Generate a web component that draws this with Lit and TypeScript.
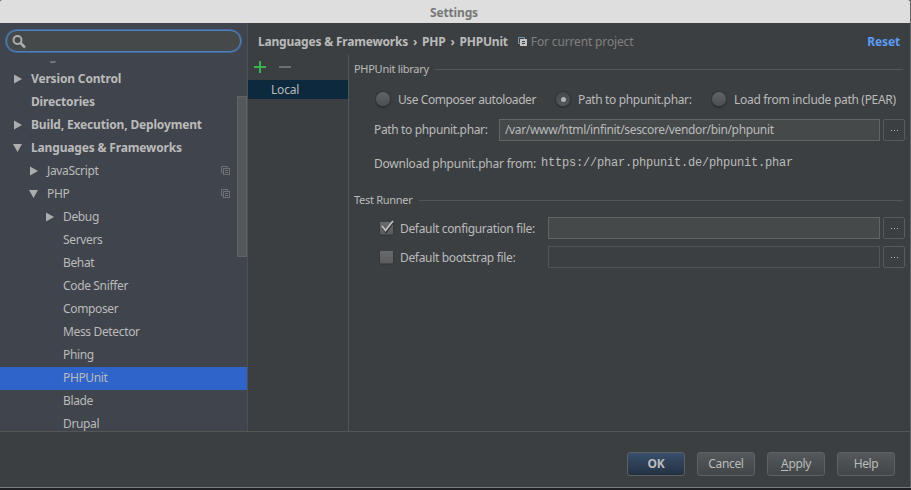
import { LitElement, html, css, svg, nothing } from "lit";
import { customElement } from "lit/decorators.js";
import { classMap } from "lit/directives/class-map.js";

interface TreeItem {
  label: string;
  level: number;
  arrow?: "open" | "closed";
  shared?: boolean;
  selected?: boolean;
  faded?: boolean;
}

const TREE: TreeItem[] = [
  { label: "Plugins", level: 0, faded: true },
  { label: "Version Control", level: 0, arrow: "closed" },
  { label: "Directories", level: 0 },
  { label: "Build, Execution, Deployment", level: 0, arrow: "closed" },
  { label: "Languages & Frameworks", level: 0, arrow: "open" },
  { label: "JavaScript", level: 1, arrow: "closed", shared: true },
  { label: "PHP", level: 1, arrow: "open", shared: true },
  { label: "Debug", level: 2, arrow: "closed" },
  { label: "Servers", level: 2 },
  { label: "Behat", level: 2 },
  { label: "Code Sniffer", level: 2 },
  { label: "Composer", level: 2 },
  { label: "Mess Detector", level: 2 },
  { label: "Phing", level: 2 },
  { label: "PHPUnit", level: 2, selected: true },
  { label: "Blade", level: 2 },
  { label: "Drupal", level: 2 },
];

const copyIcon = (back: string, front: string, fill: string) => html`
  <svg class="copy" width="10" height="10" viewBox="0 0 10 10">
    ${svg`<path d="M2.500 6.500H.5V.5H6.500V2" fill="none" stroke=${back} />
    <rect x="2.500" y="2.500" width="6" height="6" fill=${fill} stroke=${front} />
    <path d="M4 4.500H7M4 6.500H7" stroke=${fill === "none" ? front : "#3c3f41"} />`}
  </svg>`;

@customElement("app-root")
export class AppRoot extends LitElement {
  static styles = css`
    :host {
      display: block;
      width: 911px;
      height: 490px;
      overflow: hidden;
      background: #1e2024;
      color: #bbbbbb;
      font: 12px/16px "Noto Sans", sans-serif;
      letter-spacing: -0.35px;
      white-space: nowrap;
    }
    * { box-sizing: border-box; }
    svg { display: block; flex: none; }
    .window {
      width: 911px;
      height: 488px;
      display: flex;
      flex-direction: column;
      background: #3c3f41;
      border-right: 1px solid #616364;
      border-bottom: 1px solid #7b7c7c;
    }
    .title {
      flex: none;
      height: 23px;
      background: #dedede;
      color: #777777;
      font-weight: bold;
      letter-spacing: -0.15px;
      line-height: 25px;
      text-align: center;
      padding-right: 2px;
      border-radius: 2px 2px 0 0;
    }
    .body { height: 409px; display: flex; border-bottom: 1px solid #555555; }
    .side {
      flex: none;
      width: 248px;
      background: #40444c;
      border-right: 1px solid #4e5154;
      padding-top: 7px;
    }
    .search {
      width: 235px;
      height: 22px;
      margin-left: 6px;
      border: 1px solid #4b83c3;
      border-radius: 11px;
      background: #45494a;
      padding: 4px 0 0 5px;
      box-shadow: 0 0 0 1px #436793;
    }
    .scroll { height: 370px; margin-top: 9px; display: flex; overflow: hidden; }
    .tree { width: 247px; flex: none; margin-top: -16px; }
    .row { height: 23px; display: flex; align-items: center; padding: 0 0 1px 13px; }
    .l1 { padding-left: 29px; }
    .l2 { padding-left: 45px; }
    .l0 .label { font-weight: bold; letter-spacing: -0.16px; }
    .arrow { width: 18px; flex: none; }
    .label { flex: 1; }
    .faded { opacity: 0.5; }
    .selected { background: #2f65ca; }
    .row .copy { margin-right: 16px; }
    .bar {
      flex: none;
      width: 10px;
      height: 161px;
      margin: 35px 0 0 -10px;
      background: #55585b;
      border: 1px solid #606366;
    }
    .main { flex: 1; display: flex; flex-direction: column; min-width: 0; }
    .crumbs {
      height: 32px;
      display: flex;
      align-items: center;
      padding: 5px 10px 0 10px;
      font-weight: bold;
      letter-spacing: -0.2px;
    }
    .sep { width: 14px; text-align: center; }
    .crumbs .copy { margin: 0 3px 0 10px; }
    .scope { color: #808080; font-weight: normal; letter-spacing: -0.15px; flex: 1; }
    .reset { color: #589df6; letter-spacing: -0.16px; }
    .split { flex: 1; display: flex; min-height: 0; }
    .list { flex: none; width: 101px; border-right: 1px solid #555555; }
    .tools { height: 25px; padding: 6px 0 0 6px; display: flex; }
    .local { height: 19px; background: #0d293e; padding-left: 23px; line-height: 19px; letter-spacing: -0.2px; }
    .form { flex: 1; min-width: 0; padding-left: 5px; }
    .group {
      display: flex;
      align-items: center;
      height: 16px;
      font-size: 11px;
      letter-spacing: -0.28px;
      gap: 6px;
      padding-right: 7px;
    }
    .group::after { content: ""; height: 1px; flex: 1; background: #555555; }
    .g1 { margin-top: 6px; }
    .g2 { margin-top: 20px; }
    .line { display: flex; align-items: center; padding-left: 20px; }
    .line > span { flex: none; }
    .radios { height: 16px; margin-top: 14px; padding-left: 22px; }
    .radio {
      width: 14px;
      height: 14px;
      margin-right: 8px;
      border-radius: 50%;
      background: linear-gradient(#606365, #4d5052);
      box-shadow: 0 0 0 1px #323537, 0 1px 1px 1px #303335;
      display: grid;
      place-items: center;
    }
    .on { background: linear-gradient(#45484a, #55585a); }
    .on::after { content: ""; width: 5px; height: 5px; border-radius: 50%; background: #b4b4b4; }
    .r1, .r2, .r3 { padding-top: 1px; }
    .r1 { width: 144px; margin-right: 14px; letter-spacing: -0.42px; }
    .r2 { width: 120px; margin-right: 14px; }
    .r3 { letter-spacing: -0.3px; }
    .pathrow { height: 22px; margin-top: 12px; }
    .pathrow .cap { width: 125px; }
    .field { height: 22px; flex: 1; border: 1px solid #646464; background: #45494a; padding-left: 5px; line-height: 20px; }
    .off { background: none; border-color: #515355; }
    .dots {
      width: 22px;
      height: 22px;
      margin: 0 5px 0 3px;
      border: 1px solid #585b5c;
      border-radius: 2px;
      display: flex;
      align-items: center;
      justify-content: center;
      gap: 2px;
    }
    .dots i { width: 1px; height: 1px; background: #bbbbbb; }
    .download { height: 16px; margin-top: 15px; }
    .download .cap { width: 167px; letter-spacing: -0.22px; }
    .url { font-family: "Liberation Mono", monospace; letter-spacing: -0.2px; margin-top: -3px; }
    .checks { height: 22px; padding-left: 25px; }
    .c1 { margin-top: 9px; }
    .c2 { margin-top: 7px; }
    .checks .cap { width: 148px; padding-top: 1px; letter-spacing: -0.33px; }
    .check { margin-right: 6px; }
    .footer { flex: 1; display: flex; justify-content: flex-end; gap: 12px; padding: 20px 15px 0 0; }
    .btn {
      width: 58px;
      height: 24px;
      border: 1px solid #5e6161;
      border-radius: 3px;
      background: linear-gradient(#54585a, #424648);
      text-align: center;
      line-height: 22px;
    }
    .ok { background: linear-gradient(#384f6b, #233143); font-weight: bold; }
    .key { text-decoration: underline; text-underline-offset: 2px; }
  `;

  private arrow(kind?: "open" | "closed") {
    if (!kind) return nothing;
    const d = kind === "open" ? "M0 1H9L4.500 9Z" : "M1 0.500L9 5L1 9.500Z";
    return html`<svg width="9" height="10" viewBox="0 0 9 10"><path d=${d} fill="#adadad" /></svg>`;
  }

  private row(t: TreeItem) {
    const cls = {
      row: true,
      ["l" + t.level]: true,
      faded: !!t.faded,
      selected: !!t.selected,
    };
    return html`<div class=${classMap(cls)}>
      <span class="arrow">${this.arrow(t.arrow)}</span>
      <span class="label">${t.label}</span>
      ${t.shared ? copyIcon("#6f7275", "#6f7275", "none") : nothing}
    </div>`;
  }

  private dots() {
    return html`<div class="dots"><i></i><i></i><i></i></div>`;
  }

  private check(on: boolean) {
    return html`<svg class="check" width="15" height="17" viewBox="0 0 15 17">
      <defs>
        <linearGradient id="g" x2="0" y2="1"><stop stop-color="#6a6a6a" /><stop offset="1" stop-color="#5b5b5b" /></linearGradient>
      </defs>
      <rect x="0.500" y="2.500" width="14" height="13" rx="2" fill="#2f3233" />
      <rect x="1" y="2" width="13" height="12.500" rx="1" fill="url(#g)" />
      ${on
        ? svg`<path d="M3.500 7.500L7 12L14 2.500" fill="none" stroke="#2b2b2b" stroke-width="2"/>
            <path d="M3 6L6.500 10.500L14 1" fill="none" stroke="#c0c0c0" stroke-width="1.800"/>`
        : nothing}
    </svg>`;
  }

  render() {
    return html`
      <div class="window">
        <div class="title">Settings</div>
        <div class="body">
          <div class="side">
            <div class="search">
              <svg width="14" height="14" viewBox="0 0 14 14">
                <circle cx="5.500" cy="5" r="4" fill="none" stroke="#adadad" stroke-width="2" />
                <path d="M8.500 8L13 12.500" stroke="#adadad" stroke-width="2.500" />
              </svg>
            </div>
            <div class="scroll">
              <div class="tree">${TREE.map((t) => this.row(t))}</div>
              <div class="bar"></div>
            </div>
          </div>
          <div class="main">
            <div class="crumbs">
              <span>Languages &amp; Frameworks</span><span class="sep">›</span>
              <span>PHP</span><span class="sep">›</span>
              <span>PHPUnit</span>
              ${copyIcon("#7798ac", "#c4c4c4", "#c4c4c4")}
              <span class="scope">For current project</span>
              <span class="reset">Reset</span>
            </div>
            <div class="split">
              <div class="list">
                <div class="tools">
                  <svg width="38" height="12" viewBox="0 0 38 12">
                    <path d="M0 6H12M6 0V12" stroke="#37b350" stroke-width="2" />
                    <path d="M25 6H37" stroke="#6e6e6e" stroke-width="2" />
                  </svg>
                </div>
                <div class="local">Local</div>
              </div>
              <div class="form">
                <div class="group g1">PHPUnit library</div>
                <div class="line radios">
                  <span class="radio"></span><span class="r1">Use Composer autoloader</span>
                  <span class="radio on"></span><span class="r2">Path to phpunit.phar:</span>
                  <span class="radio"></span><span class="r3">Load from include path (PEAR)</span>
                </div>
                <div class="line pathrow">
                  <span class="cap">Path to phpunit.phar:</span>
                  <div class="field">/var/www/html/infinit/sescore/vendor/bin/phpunit</div>
                  ${this.dots()}
                </div>
                <div class="line download">
                  <span class="cap">Download phpunit.phar from:</span>
                  <span class="url">https://phar.phpunit.de/phpunit.phar</span>
                </div>
                <div class="group g2">Test Runner</div>
                <div class="line checks c1">
                  ${this.check(true)}<span class="cap">Default configuration file:</span>
                  <div class="field"></div>
                  ${this.dots()}
                </div>
                <div class="line checks c2">
                  ${this.check(false)}<span class="cap">Default bootstrap file:</span>
                  <div class="field off"></div>
                  ${this.dots()}
                </div>
              </div>
            </div>
          </div>
        </div>
        <div class="footer">
          <div class="btn ok">OK</div>
          <div class="btn">Cancel</div>
          <div class="btn"><span class="key">A</span>pply</div>
          <div class="btn">Help</div>
        </div>
      </div>
    `;
  }
}
